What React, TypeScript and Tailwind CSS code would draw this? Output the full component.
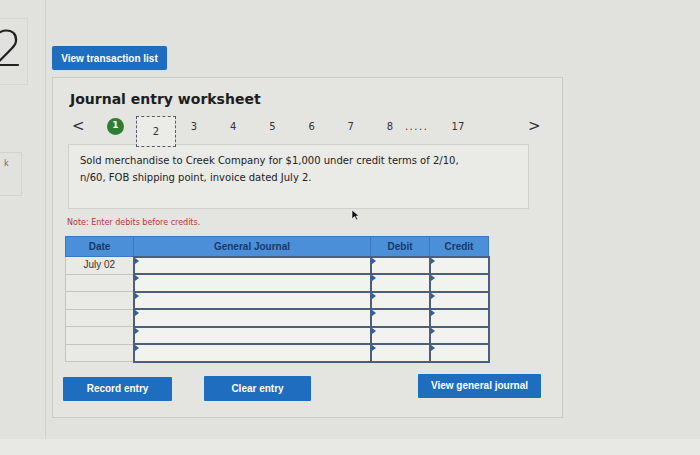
import React from 'react';

const pages = ['3', '4', '5', '6', '7', '8'];

const verdana = { fontFamily: '"DejaVu Sans", Verdana, sans-serif' };
const arial = { fontFamily: '"Liberation Sans", Arial, sans-serif' };

const rows = ['July 02', '', '', '', '', ''];

const Marker = () => (
  <span className="absolute left-0 top-0 w-0 h-0 border-t-[3px] border-b-[3px] border-l-[4px] border-t-transparent border-b-transparent border-l-[#2b5fa8]" />
);

const App = () => {
  return (
    <div className="w-[700px] h-[455px] bg-[#e1e1de] flex overflow-hidden relative" style={verdana}>
      {/* left strip */}
      <div className="w-[46px] shrink-0 border-r border-[#cfcfcb] flex flex-col">
        <div className="h-[67px] mt-[18px] w-[28px] border border-l-0 border-[#d6d6d2] overflow-hidden">
          <span className="block -ml-[8px] mt-[2px] text-[50px] leading-[56px] font-light text-[#222]" style={verdana}>2</span>
        </div>
        <div className="mt-[67px] w-[22px] h-[44px] border border-l-0 border-[#d2d2ce] pt-[7px] pl-[4px] text-[8px] text-[#667] leading-none">
          k
        </div>
      </div>

      {/* main */}
      <div className="flex-1 pl-[6px] pt-[46px]">
        <button
          className="block w-[115px] h-[24px] bg-[#1e6dbf] text-white text-[10px] font-bold rounded-[2px] shadow-[0_0_0_1px_#cfe0f2]"
          style={arial}
        >
          View transaction list
        </button>

        <div className="mt-[7px] w-[511px] h-[341px] border border-[#cacac6] bg-[#e4e4e1] pl-[17px] pt-[12px] relative">
          <h1 className="text-[14px] font-bold text-[#1d1d1d] leading-[18px]" style={verdana}>
            Journal entry worksheet
          </h1>

          {/* pagination */}
          <div className="flex items-center h-[30px] mt-[3px] text-[10px] text-[#333]">
            <span className="w-[37px] pl-[2px] text-[15px] text-[#333]">&lt;</span>
            <span className="w-[17px] h-[17px] rounded-full bg-[#2e7d32] text-white text-[9px] font-bold flex items-center justify-center">1</span>
            <span className="ml-[12px] w-[40px] h-[31px] border border-dashed border-[#555a70] bg-[#ebebe8] flex items-center justify-center relative top-[5px] z-10">2</span>
            {pages.map((p, i) => (
              <span key={p} className={`w-[39.2px] text-center ${i === 0 ? '-ml-[1.6px]' : ''}`}>{p}</span>
            ))}
            <span className="w-[30px] -ml-[4.6px] tracking-[1.5px] text-[10px]">.....</span>
            <span className="ml-[6px] w-[34px] text-center">17</span>
            <span className="ml-[53px] text-[15px] text-[#333]">&gt;</span>
          </div>

          {/* description */}
          <div className="mt-[3px] -ml-[2px] w-[461px] h-[65px] border border-[#cfcfcb] bg-[#eaeae7] pl-[11px] pt-[7px] text-[10px] leading-[17px] text-[#222]">
            Sold merchandise to Creek Company for $1,000 under credit terms of 2/10,
            <br />
            n/60, FOB shipping point, invoice dated July 2.
          </div>

          <p className="mt-[9px] -ml-[3px] text-[8px] leading-[10px] text-[#b03a3a]">Note: Enter debits before credits.</p>

          {/* table */}
          <table className="mt-[8px] -ml-[5px] border-collapse text-[10px]" style={arial}>
            <thead>
              <tr className="h-[20px] bg-[#4b8fd8] text-[#173a6b] font-bold">
                <th className="w-[68px] border border-[#3b78c0]">Date</th>
                <th className="w-[237px] border border-[#3b78c0]">General Journal</th>
                <th className="w-[59px] border border-[#3b78c0]">Debit</th>
                <th className="w-[59px] border border-[#3b78c0]">Credit</th>
              </tr>
            </thead>
            <tbody>
              {rows.map((d, i) => (
                <tr key={i} className="h-[17.5px]">
                  <td className="border border-[#c4c4c0] bg-[#e9e9e6] text-center text-[#333] leading-[12px]">{d}</td>
                  <td className="border-2 border-[#4d5d7c] bg-[#f2f2ef] relative"><Marker /></td>
                  <td className="border-2 border-[#4d5d7c] bg-[#f2f2ef] relative"><Marker /></td>
                  <td className="border-2 border-[#4d5d7c] bg-[#f2f2ef] relative"><Marker /></td>
                </tr>
              ))}
            </tbody>
          </table>

          {/* buttons */}
          <div className="flex items-start mt-[11px] -ml-[7px] text-[10px] font-bold text-white" style={arial}>
            <button className="w-[109px] h-[24px] mt-[3px] bg-[#1e6dbf] rounded-[1px]">Record entry</button>
            <button className="ml-[32px] w-[107px] h-[25px] mt-[2px] bg-[#1e6dbf] rounded-[1px]">Clear entry</button>
            <button className="ml-[107px] w-[123px] h-[24px] bg-[#1e6dbf] rounded-[1px]">View general journal</button>
          </div>

          {/* cursor */}
          <svg className="absolute left-[298px] top-[131px]" width="9" height="12" viewBox="0 0 9 12">
            <path d="M1 1 L1 10 L3.5 7.5 L5.5 11 L6.8 10.3 L5 7 L8 7 Z" fill="#111" stroke="#fff" strokeWidth="0.6" />
          </svg>
        </div>
      </div>
      <div className="absolute left-0 right-0 bottom-0 h-[16px] bg-[#e8e8e5]" />
    </div>
  );
};

export default App;
